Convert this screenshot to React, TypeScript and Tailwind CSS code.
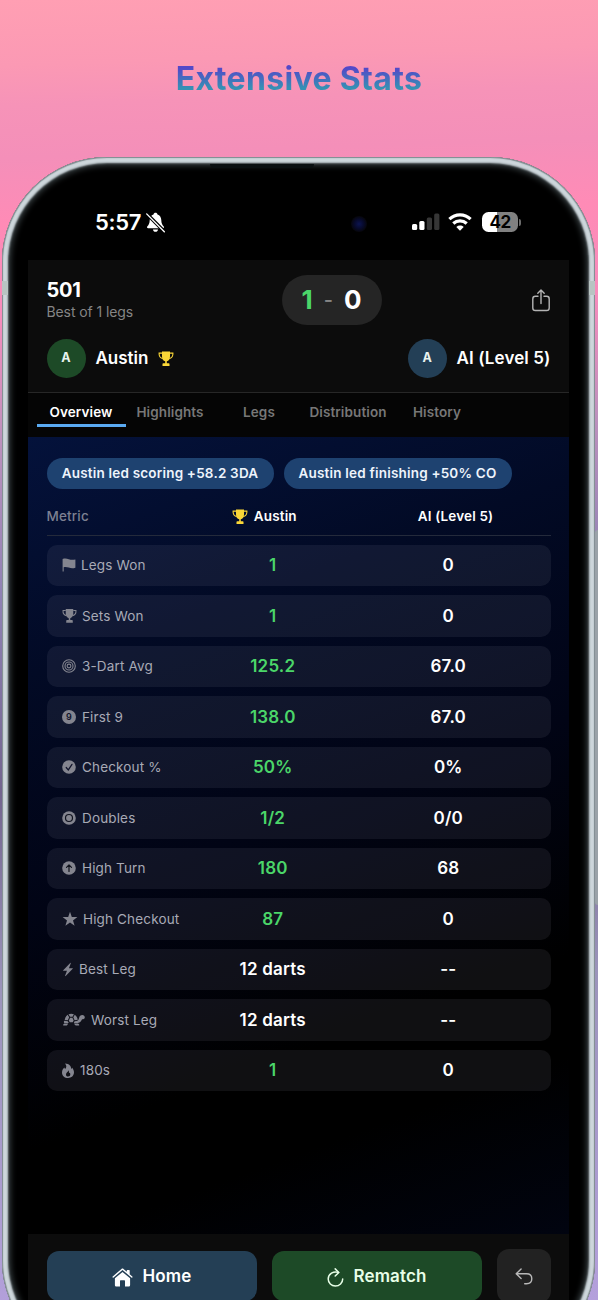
import React from "react";

type IconProps = { className?: string };

const TrophyIcon = ({ className = "" }: IconProps) => (
  <svg viewBox="0 0 16 16" className={className} fill="currentColor">
    <path d="M4 .6h8v4.8c0 2.6-1.3 4.4-3.2 4.9v1.9h1.900c.5 0 .8.3.8.8v2.100h-7V13c0-.5.3-.8.8-.8h1.900v-1.900C5.300 9.800 4 8 4 5.400Z" />
    <path
      d="M4 2.100H1.100C.9 4.900 2.300 7 4.700 7.600M12 2.100h2.900C15.100 4.900 13.700 7 11.300 7.600"
      fill="none"
      stroke="currentColor"
      strokeWidth="1.1"
    />
  </svg>
);

const FlagIcon = ({ className = "" }: IconProps) => (
  <svg viewBox="0 0 14 14" className={className} fill="currentColor">
    <path d="M.6 1C2.800.2 4.600.400 6.800 1.200c2.200.800 4 .9 6.600.2v8.300c-2.500.8-4.500.6-6.600-.1-2-.7-3.500-.8-5.100-.4v4.300H.6Z" />
  </svg>
);

const TargetIcon = ({ className = "" }: IconProps) => (
  <svg viewBox="0 0 14 14" className={className} fill="none" stroke="currentColor">
    <circle cx="7" cy="7" r="6.300" strokeWidth="1.100" />
    <circle cx="7" cy="7" r="4" strokeWidth="1.100" />
    <circle cx="7" cy="7" r="1.900" strokeWidth="1.100" />
  </svg>
);

const NineIcon = ({ className = "" }: IconProps) => (
  <span
    className={`flex items-center justify-center rounded-full bg-[#84858f] text-[9px] font-semibold leading-none text-[#11142a] ${className}`}
  >
    9
  </span>
);

const CheckIcon = ({ className = "" }: IconProps) => (
  <svg viewBox="0 0 14 14" className={className}>
    <circle cx="7" cy="7" r="6.800" fill="currentColor" />
    <path d="M4.200 7.500 6.300 9.900l3.700-5.600" fill="none" stroke="#10132a" strokeWidth="1.200" strokeLinecap="round" />
  </svg>
);

const DoubleIcon = ({ className = "" }: IconProps) => (
  <svg viewBox="0 0 14 14" className={className}>
    <circle cx="7" cy="7" r="6.800" fill="currentColor" />
    <circle cx="7" cy="7" r="3.500" fill="none" stroke="#10131f" strokeWidth="1.200" />
  </svg>
);

const ArrowUpIcon = ({ className = "" }: IconProps) => (
  <svg viewBox="0 0 14 14" className={className}>
    <circle cx="7" cy="7" r="6.800" fill="currentColor" />
    <path
      d="M7 10.400V4M4.500 6.300 7 3.800l2.500 2.500"
      fill="none"
      stroke="#10131c"
      strokeWidth="1.200"
      strokeLinecap="round"
      strokeLinejoin="round"
    />
  </svg>
);

const StarIcon = ({ className = "" }: IconProps) => (
  <svg viewBox="0 0 16 16" className={className} fill="currentColor">
    <path d="m8 .8 1.800 5.200h5.600l-4.400 3.400 1.600 5.300L8 11.500l-4.600 3.200L5 9.400.6 6h5.600Z" />
  </svg>
);

const BoltIcon = ({ className = "" }: IconProps) => (
  <svg viewBox="0 0 12 16" className={className} fill="currentColor">
    <path d="M8.400 1 .9 8.700c-.3.300-.1.700.2.700h3.800L2.900 14.600c-.1.400.3.700.6.400L11 7.300c.3-.3.100-.7-.2-.7H7l2-5.200c.100-.4-.3-.7-.6-.4Z" />
  </svg>
);

const TurtleIcon = ({ className = "" }: IconProps) => (
  <svg viewBox="0 0 23 13" className={className} fill="currentColor">
    <path d="M5.600 1.800 7.200 4.300 5.800 7.300 2.700 6.900C3.100 4.600 4 2.900 5.600 1.800ZM6.500 1.300c1.700-.8 3.800-.8 5.400 0L10.500 3.800H8ZM12.800 1.800c1.700 1.100 2.600 2.800 3 5l-3.200.500-1.300-3ZM8.100 4.700h2.300l1.300 2.800-1 1.800H7.800l-1-1.800ZM2.500 7.800l3.300.4 1 1.700H2.600C1.700 9.900 1.500 8.300 2.500 7.800Z" />
    <path d="M12.600 8.200c2.900-.2 4-.8 4.400-3 .3-2 1.600-3.200 3.300-3.200 1.500 0 2.500 1 2.500 2.300 0 1.400-1 2-2.700 2-.9 2-1.900 3.300-4.300 3.600h-4ZM2.300 10.400h3.900L5.300 12c-.3.500-.7.600-1.200.6H1.900c-1.300 0-.900-1.300.4-2.200ZM12 10.400h4c1.600.8 1.700 2.200.3 2.200h-2.200c-.7 0-1-.300-1.300-.8Z" />
  </svg>
);

const FlameIcon = ({ className = "" }: IconProps) => (
  <svg viewBox="0 0 12 15" className={className} fill="currentColor" fillRule="evenodd">
    <path d="M3 .5C7.300.700 9.200 3.300 9.300 6c.5-.4.7-1 .7-1.600C11.400 6 12 7.600 12 9.300 12 12.700 9.500 15 6.100 15 2.500 15 0 12.700 0 9.400 0 7 1.500 5.500 2.400 4.600c.100.600.3 1 .7 1.400C4.800 4.600 4.700 2.200 3 .5Zm3.300 6.700C6.200 9 4 9.500 4 11.400c0 1.300.8 2.100 2.100 2.100s2.200-.8 2.200-2.200c0-.8-.3-1.400-.7-1.900-.100.400-.3.600-.6.700.100-1.100-.1-2-.7-2.900Z" />
  </svg>
);

const BellOffIcon = () => (
  <svg viewBox="0 0 18 20" className="h-[21px] w-[19px]">
    <path
      d="M9 .8c1 0 1.700.6 1.900 1.500 2.300.8 3.500 2.700 3.600 5.300.1 3.200.9 4.600 2.200 6 .8.900.4 1.900-.8 1.900H2.100c-1.200 0-1.600-1-.8-1.900 1.300-1.400 2.100-2.800 2.200-6C3.600 5 4.800 3.100 7.100 2.300 7.300 1.400 8 .8 9 .8ZM6.600 16.600h4.800c-.2 1.400-1.100 2.200-2.400 2.200s-2.200-.8-2.400-2.200Z"
      fill="#fff"
    />
    <path d="m.2 1.200 17.400 17.600" stroke="#000" strokeWidth="3.400" />
    <path d="m.6 1.800 16.800 17" stroke="#fff" strokeWidth="1.300" strokeLinecap="round" />
  </svg>
);

const SignalIcon = () => (
  <svg viewBox="0 0 28 18" className="h-[18px] w-7">
    <rect x="0" y="11" width="5.200" height="6" rx="1.500" fill="#fff" />
    <rect x="7.300" y="8" width="5.200" height="9" rx="1.500" fill="#fff" />
    <rect x="14.800" y="4.500" width="5.200" height="12.500" rx="1.500" fill="#363636" />
    <rect x="22.200" y="0.500" width="5.200" height="16.500" rx="1.500" fill="#363636" />
  </svg>
);

const WifiIcon = () => (
  <svg viewBox="0 0 24 18" className="h-[18px] w-6" fill="none" stroke="#fff" strokeWidth="3.200">
    <path d="M1.400 6.200c6-5.700 15.200-5.700 21.200 0" />
    <path d="M5.300 10.500c3.800-3.500 9.600-3.500 13.400 0" />
    <path d="M8.300 13.900c2.200-1.900 5.200-1.900 7.400 0L12 17.700Z" fill="#fff" stroke="none" />
  </svg>
);

const ShareIcon = () => (
  <svg
    viewBox="0 0 18 23"
    className="h-[23px] w-[18px]"
    fill="none"
    stroke="#b4b4b4"
    strokeWidth="1.400"
    strokeLinecap="round"
    strokeLinejoin="round"
  >
    <path d="M6 7.300H3.400C1.700 7.300.8 8.200.8 9.900v9c0 1.700.9 2.600 2.600 2.600h11.200c1.700 0 2.600-.9 2.600-2.600v-9c0-1.700-.9-2.600-2.600-2.600H12" />
    <path d="M9 14.600V1.200M5.800 4.200 9 1l3.200 3.200" />
  </svg>
);

const HomeIcon = () => (
  <svg viewBox="0 0 21 19" className="h-[19px] w-[21px]" fill="#fff">
    <path d="M10.500.5c.4 0 .7.100 1 .4l3.300 2.800V2.600c0-.4.200-.6.600-.6h1.700c.4 0 .6.200.6.600v3.600l2.600 2.300c.7.700-.1 1.600-.9 1L10.500 2.100 1.600 9.500c-.8.600-1.600-.3-.9-1L9.500.9c.3-.3.600-.4 1-.4Z" />
    <path d="m10.500 3.900 7.600 6.300v6.700c0 1.100-.7 1.700-1.700 1.700H13v-5.700c0-.4-.2-.6-.6-.6H8.600c-.4 0-.6.200-.6.600v5.700H4.600c-1 0-1.700-.6-1.700-1.700v-6.700Z" />
  </svg>
);

const RematchIcon = () => (
  <svg
    viewBox="0 0 17 19"
    className="h-[19px] w-[17px]"
    fill="none"
    stroke="#e8ffe8"
    strokeWidth="1.500"
    strokeLinecap="round"
    strokeLinejoin="round"
  >
    <path d="M11.500 4.400C6.500 2.700 1.200 6 1.200 11c0 4 3.200 7 7.200 7s7.300-3.200 7.300-7" />
    <path d="M8.200.9 11.800 4.500 8.200 8" />
  </svg>
);

const UndoIcon = () => (
  <svg
    viewBox="0 0 18 17"
    className="h-[17px] w-[18px]"
    fill="none"
    stroke="#b9b9b9"
    strokeWidth="1.400"
    strokeLinecap="round"
    strokeLinejoin="round"
  >
    <path d="M6.100 1 1.200 5.800l4.900 4.700M1.500 5.800h10c3.400 0 5.300 2 5.300 4.900s-1.900 5-5.300 5H9.700" />
  </svg>
);

const metrics = [
  { label: "Legs Won", icon: <FlagIcon className="mr-[5px] size-3.5" />, home: "1", away: "0" },
  { label: "Sets Won", icon: <TrophyIcon className="mr-[5px] h-4 w-[15px]" />, home: "1", away: "0" },
  { label: "3-Dart Avg", icon: <TargetIcon className="mr-1.5 size-3.5" />, home: "125.2", away: "67.0" },
  { label: "First 9", icon: <NineIcon className="mr-1.5 size-3.5" />, home: "138.0", away: "67.0" },
  { label: "Checkout %", icon: <CheckIcon className="mr-1.5 size-3.5" />, home: "50%", away: "0%" },
  { label: "Doubles", icon: <DoubleIcon className="mr-1.5 size-3.5" />, home: "1/2", away: "0/0" },
  { label: "High Turn", icon: <ArrowUpIcon className="mr-1.5 size-3.5" />, home: "180", away: "68" },
  { label: "High Checkout", icon: <StarIcon className="mr-[5px] h-4 w-[16px]" />, home: "87", away: "0" },
  { label: "Best Leg", icon: <BoltIcon className="mr-[5px] h-[15px] w-3" />, home: "12 darts", away: "--", tie: true },
  { label: "Worst Leg", icon: <TurtleIcon className="mr-1.5 h-[13px] w-[23px]" />, home: "12 darts", away: "--", tie: true },
  { label: "180s", icon: <FlameIcon className="mr-1.5 h-[15px] w-3" />, home: "1", away: "0" },
];

const tabs = ["Overview", "Highlights", "Legs", "Distribution", "History"];

const Avatar = ({ className = "" }: IconProps) => (
  <div className={`flex size-[39px] items-center justify-center rounded-full text-[12.500px] font-bold text-[#e8f2ee] ${className}`}>
    A
  </div>
);

const StatusBar = () => (
  <div className="relative flex h-[103px] items-start justify-between pl-[67px] pr-[48px] pt-[51px]">
    <div className="absolute left-[182px] top-[7px] h-1 w-[104px] rounded-b bg-[#0b1012]" />
    <div className="absolute left-[323px] top-[59px] size-4 rounded-full bg-[radial-gradient(circle,#0c1450_0%,#070a2c_40%,#06060c_70%)]" />
    <div className="flex h-7 items-center gap-[5px]">
      <span className="text-[22px] font-semibold tracking-[-0.3px] text-white">5:57</span>
      <BellOffIcon />
    </div>
    <div className="flex h-7 items-center">
      <SignalIcon />
      <span className="ml-2">
        <WifiIcon />
      </span>
      <div className="ml-2.5 flex h-5 w-9 items-center justify-center rounded-[6.500px] bg-[linear-gradient(90deg,#fff_42%,#818181_42%)] text-[17px] font-bold leading-none tracking-[-0.5px] text-black">
        42
      </div>
      <div className="ml-px h-[7px] w-[2px] rounded-r-full bg-[#6b6b6b]" />
    </div>
  </div>
);

const MatchHeader = () => (
  <header className="h-[133px] border-b border-[#272727] bg-[#0c0c0c] px-[18.500px] pt-[14px]">
    <div className="flex h-[51px] items-center">
      <div className="w-[235px]">
        <div className="text-[20px] font-bold leading-6 tracking-[-0.3px] text-white">501</div>
        <div className="text-[14px] leading-5 tracking-[-0.1px] text-[#858585]">Best of 1 legs</div>
      </div>
      <div className="flex h-[50px] w-[100px] items-center justify-center gap-[11px] rounded-full bg-[#252525] text-[26px] font-bold">
        <span className="text-[#4bd669]">1</span>
        <span className="text-[20px] font-medium text-[#858585]">-</span>
        <span className="text-white">0</span>
      </div>
      <div className="flex flex-1 justify-end pr-px pt-px">
        <ShareIcon />
      </div>
    </div>
    <div className="mt-3.5 flex items-center justify-between text-[17px] font-semibold text-white">
      <div className="flex items-center">
        <Avatar className="bg-[#1d4a27]" />
        <span className="ml-2.5 pt-px">Austin</span>
        <TrophyIcon className="ml-2.5 mt-px size-4 text-[#fbd737]" />
      </div>
      <div className="flex items-center">
        <Avatar className="bg-[#233f56]" />
        <span className="ml-2.5 pt-px tracking-[0.1px]">AI (Level 5)</span>
      </div>
    </div>
  </header>
);

const Tabs = () => (
  <nav className="flex h-[44px] bg-[#050505] pl-[8.500px]">
    {tabs.map((tab, index) => (
      <div
        key={tab}
        className={`h-[34px] w-[89px] pt-[9px] text-center text-[13.500px] font-semibold leading-5 tracking-[0.1px] ${
          index === 0 ? "border-b-[3px] border-[#5aaaf2] text-white" : "text-[#777]"
        }`}
      >
        {tab}
      </div>
    ))}
  </nav>
);

const Chip = ({ children }: { children: React.ReactNode }) => (
  <div className="flex h-[31px] items-center justify-center whitespace-nowrap rounded-full bg-[#1e4270] pt-px text-[13.500px] font-semibold tracking-[0.2px] text-[#eef4fc]">
    {children}
  </div>
);

const Overview = () => (
  <section className="h-[797px] bg-[linear-gradient(160deg,#04123b_0%,#020a25_24%,#010415_48%,#000_72%,#000_82%,#010410_100%)] pl-[18.500px] pr-[18px] pt-[20.500px]">
    <div className="grid grid-cols-[227px_228px] gap-2.5">
      <Chip>Austin led scoring +58.2 3DA</Chip>
      <Chip>Austin led finishing +50% CO</Chip>
    </div>
    <div className="mt-[9px] grid h-[38px] grid-cols-[122px_191.500px_191px] items-center border-b border-[#242a3b] pt-px text-[13.500px] font-semibold tracking-[0.15px] text-white">
      <span className="font-medium text-[#7c8091]">Metric</span>
      <span className="flex items-center justify-center gap-1.5">
        <TrophyIcon className="size-4 text-[#fbd737]" />
        Austin
      </span>
      <span className="text-center">AI (Level 5)</span>
    </div>
    <div className="mt-[9px] flex flex-col gap-[9px]">
      {metrics.map((metric) => (
        <div
          key={metric.label}
          className="grid h-[41.500px] grid-cols-[123px_175.500px_175.500px] items-center rounded-[10px] bg-[#9a9ab0]/10 px-[15.500px] text-[17px] font-semibold tracking-[0.2px] text-white"
        >
          <div className="flex items-center whitespace-nowrap text-[13.500px] font-normal tracking-[0.15px] text-[#a8aab6]">
            <span className="text-[#84858f]">{metric.icon}</span>
            {metric.label}
          </div>
          <span className={`pt-px text-center ${metric.tie ? "" : "text-[#4bd669]"}`}>{metric.home}</span>
          <span className="pt-px text-center">{metric.away}</span>
        </div>
      ))}
    </div>
  </section>
);

const BottomBar = () => (
  <footer className="flex h-24 items-start gap-[15px] bg-[#0c0c0c] pl-[18.500px] pt-[15px] text-[17px] font-semibold">
    <button className="mt-0.5 flex h-[50px] w-[210px] items-center justify-center gap-2.5 rounded-xl bg-[#243f55] pt-0.5 tracking-[0.1px] text-white">
      <HomeIcon />
      Home
    </button>
    <button className="mt-0.5 flex h-[50px] w-[210px] items-center justify-center gap-2.5 rounded-xl bg-[#1d4a27] pt-0.5 tracking-[0.1px] text-[#e8ffe8]">
      <RematchIcon />
      Rematch
    </button>
    <button className="flex size-[54px] items-center justify-center rounded-xl bg-[#222]">
      <UndoIcon />
    </button>
  </footer>
);

export default function App() {
  return (
    <div className="relative h-[1300px] w-[598px] overflow-hidden bg-[linear-gradient(178deg,#ff9fb3_0%,#fb99b4_5%,#f693b8_8%,#f48fb9_12%,#ff8bb6_17%,#f68cbc_24%,#bd91bd_33%,#8f82b4_45%,#73658e_60%,#9b94ba_75%,#b4a0dc_100%)] font-['Inter',sans-serif]">
      <div className="flex h-[157px] items-start justify-center pt-[58px]">
        <h1 className="bg-[linear-gradient(180deg,#5348c8_24%,#3591b4_72%)] bg-clip-text text-[32px] font-bold leading-[42px] tracking-[0.35px] text-transparent">
          Extensive Stats
        </h1>
      </div>

      {/* Side button */}
      <div className="absolute right-0 top-[530px] h-[375px] w-[3px] rounded-l bg-[#9aa2a8]" />

      {/* Phone body, runs past the bottom edge */}
      <div className="relative ml-[2px] h-[1208px] w-[593px] rounded-[105px] bg-black px-[26px] shadow-[inset_0_0_1px_1px_#7e898d,inset_0_0_2px_6px_#cdd6db,inset_0_0_6px_8px_#3f484b]">
        <div className="absolute left-0 top-[124px] h-3.5 w-[6px] bg-[#b8c4c2]" />
        <div className="absolute right-0 top-[124px] h-3.5 w-[6px] bg-[#b8c4c2]" />
        <StatusBar />
        <MatchHeader />
        <Tabs />
        <Overview />
        <BottomBar />
      </div>
    </div>
  );
}
